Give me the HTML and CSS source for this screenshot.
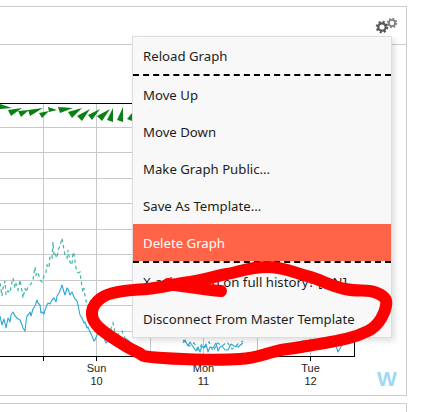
FILE: index.html
```html
<!DOCTYPE html>
<html lang="en">
<head>
<meta charset="utf-8">
<title>Graph menu</title>
<link rel="stylesheet" href="styles.css">
</head>
<body>
<section class="card">
  <header class="card-header">
    <svg class="gears" width="24" height="18" viewBox="0 0 24 18" aria-hidden="true">
      <circle class="gear-big-teeth" cx="7" cy="11" r="5.3"/>
      <circle class="gear-big" cx="7" cy="11" r="3.7"/>
      <circle class="gear-small-teeth" cx="17" cy="7" r="4.5"/>
      <circle class="gear-small" cx="17" cy="7" r="3.1"/>
    </svg>
  </header>
  <svg class="chart" width="406" height="350" viewBox="0 45 406 350">
    <g class="grid">
      <path d="M0 127.5H354M0 152.5H354M0 178.5H354M0 203.5H354M0 229.5H354M0 254.5H354M0 280.5H354M0 305.5H354M0 331.5H354"/>
      <path d="M43.5 103V356M96.5 103V356M150.5 103V356M203.5 103V356M257.5 103V356M310.5 103V356"/>
    </g>
    <g class="barbs">
      <polygon points="0,104 0,109 12,108"/>
      <polygon points="8,110 11,116 22,108"/>
      <polygon points="18,111 21,117 29,110"/>
      <polygon points="28,110 30,116 43,108"/>
      <polygon points="39,113 42,118 49,111"/>
      <polygon points="48,107 49,112 57,110"/>
      <polygon points="58,107 60,113 73,108"/>
      <polygon points="68,112 72,118 82,108"/>
      <polygon points="77,116 82,121 90,109"/>
      <polygon points="88,115 92,120 100,109"/>
      <polygon points="97,116 102,121 110,109"/>
      <polygon points="107,120 113,122 113,108"/>
      <polygon points="117,120 123,122 123,107"/>
      <polygon points="127,119 132,121 132,113"/>
    </g>
    <polyline class="series-teal" points="0,283 2,296 3,288 5,281 6,295 8,291 10,293 11,286 13,278 15,288 16,284 18,290 20,280 21,285 23,298 25,288 26,292 28,287 31,284 33,280 35,267 36,275 38,272 40,280 42,282 44,276 46,272 47,265 49,268 50,256 52,258 53,242 54,256 55,254 57,258 58,250 60,246 62,238 64,250 65,255 67,258 68,250 70,262 72,265 73,252 74,254 76,268 78,273 80,272 81,280 83,292 84,288 85,296 87,305 90,309 92,313 95,318 98,320 101,324 103,326 106,330 108,329 110,332 113,323 115,333 117,335 120,333 122,331 125,338 128,340 132,344"/>
    <polyline class="series-teal" points="183,340 187,344 190,346 194,343 198,350 202,344 205,347 209,342 213,351 218,343 222,346 227,342 232,349 238,344 243,341"/>
    <polyline class="series-teal" points="294,344 303,341 312,345 322,340 330,345"/>
    <polyline class="series-blue" points="0,316 2,325 4,319 6,328 8,318 10,322 11,315 13,312 15,316 17,318 20,320 22,325 23,328 25,331 26,322 27,316 29,314 30,312 31,316 33,309 35,306 37,300 38,303 40,305 41,313 42,312 44,314 45,310 47,305 48,303 50,304 52,300 54,298 56,302 57,296 59,293 61,288 62,285 64,292 65,295 67,288 68,289 70,295 72,292 74,297 75,299 77,301 78,305 79,310 80,315 82,318 84,323 85,322 87,328 88,327 90,332 92,336 94,341 95,340 97,335 98,334 100,333 102,336 104,338 106,343 107,342 109,338 111,336 113,339 115,337 117,341 119,340 121,343 123,342 126,339 128,340 130,344 132,345"/>
    <polyline class="series-blue" points="183,343 185,340 188,346 190,342 192,345 194,348 196,351 198,347 200,352 202,346 204,348 206,344 208,352 210,347 213,348 216,343 218,351 220,347 222,346 225,350 228,350 231,344 234,346 238,347 243,343"/>
    <polyline class="series-blue" points="294,347 302,342 312,345 320,342 326,341 333,345 335,343 338,352 342,345 347,340"/>
    <path class="axis" d="M0 103.5H354M0 356.5H354.5V338M43.5 356V361M96.5 356V361M150.5 356V361M203.5 356V361M257.5 356V361M310.5 356V361"/>
    <text class="tick" x="96.5" y="372">Sun</text>
    <text class="tick" x="96.5" y="385">10</text>
    <text class="tick" x="203.5" y="372">Mon</text>
    <text class="tick" x="203.5" y="385">11</text>
    <text class="tick" x="310.5" y="372">Tue</text>
    <text class="tick" x="310.5" y="385">12</text>
    <text class="watermark" x="377" y="386">W</text>
  </svg>
  <ul class="menu">
    <li class="menu-item">Reload Graph</li>
    <li class="menu-rule"></li>
    <li class="menu-item">Move Up</li>
    <li class="menu-item">Move Down</li>
    <li class="menu-item">Make Graph Public...</li>
    <li class="menu-item">Save As Template...</li>
    <li class="menu-item menu-item-danger">Delete Graph</li>
    <li class="menu-rule"></li>
    <li class="menu-item">X-axis based on full history? [ON]</li>
    <li class="menu-item">Disconnect From Master Template</li>
  </ul>
</section>
<section class="card card-next"></section>
<svg class="scribble" width="437" height="412" viewBox="0 0 437 412" aria-hidden="true">
  <path d="M221 291C205 290 190 287 168 284M92 315C91 305 100 296 113 293S135 290 147 289S175 284 190 282S215 276 227 274S250 267 267 267S292 272 307 276S330 286 345 289S368 289 377 293S387 300 386 306S380 325 368 331S345 340 307 346S285 349 273 352S255 358 240 359S190 360 163 358S146 356 137 352S122 344 113 338S93 325 92 315Z"/>
</svg>
</body>
</html>
```
FILE: styles.css
```css
* { box-sizing: border-box; }
html, body { margin: 0; padding: 0; }
body {
  position: relative;
  width: 437px;
  height: 412px;
  overflow: hidden;
  background: #fff;
  font-family: "Noto Sans", "Open Sans", sans-serif;
  color: #1c1c1c;
}
.card {
  position: relative;
  width: 407px;
  height: 390px;
  margin-top: 6px;
  background: #fff;
  border: 1px solid #ccc;
  border-left: 0;
}
.card-next { margin-top: 7px; height: 20px; border-bottom: 0; }
.card-header {
  display: flex;
  justify-content: flex-end;
  height: 38px;
  padding: 9px 7px 0 0;
  border-bottom: 1px solid #ccc;
}
.gears { display: block; }
.gear-big { fill: none; stroke: #555; stroke-width: 2.2; }
.gear-big-teeth { fill: none; stroke: #555; stroke-width: 2; stroke-dasharray: 2.1 2.06; }
.gear-small { fill: none; stroke: #808080; stroke-width: 1.8; }
.gear-small-teeth { fill: none; stroke: #808080; stroke-width: 1.6; stroke-dasharray: 1.8 1.73; }
.chart { display: block; }
.grid path { fill: none; stroke: #c8c8c8; stroke-width: 1; shape-rendering: crispEdges; }
.barbs polygon { fill: #0a8212; }
.axis { fill: none; stroke: #000; stroke-width: 1; shape-rendering: crispEdges; }
.series-teal { fill: none; stroke: #3fb5a6; stroke-width: 1.2; stroke-dasharray: 3.5 3; }
.series-blue { fill: none; stroke: #2ba6d6; stroke-width: 1.1; stroke-linejoin: round; }
.tick {
  font-family: "Liberation Sans", Arial, sans-serif;
  font-size: 11px;
  fill: #222;
  text-anchor: middle;
}
.watermark {
  font-family: "Liberation Sans", Arial, sans-serif;
  font-size: 21px;
  font-weight: 700;
  fill: #9fd8f2;
}
.menu {
  position: absolute;
  top: 29px;
  left: 132px;
  width: 260px;
  margin: 0;
  padding: 0;
  list-style: none;
  background: #f8f8f8;
  border: 1px solid #ddd;
  box-shadow: 3px 3px 6px rgba(0, 0, 0, 0.12);
  font-size: 13.2px;
}
.menu-item {
  height: 37px;
  padding: 1px 10px 0;
  line-height: 37px;
  white-space: nowrap;
}
.menu-item-danger { background: #ff6448; color: #fff; }
.menu-rule { height: 2px; border-top: 2px dashed #000; }
.scribble { position: absolute; top: 0; left: 0; pointer-events: none; }
.scribble path { fill: none; stroke: #f00; stroke-width: 12; stroke-linecap: round; stroke-linejoin: round; }
```
